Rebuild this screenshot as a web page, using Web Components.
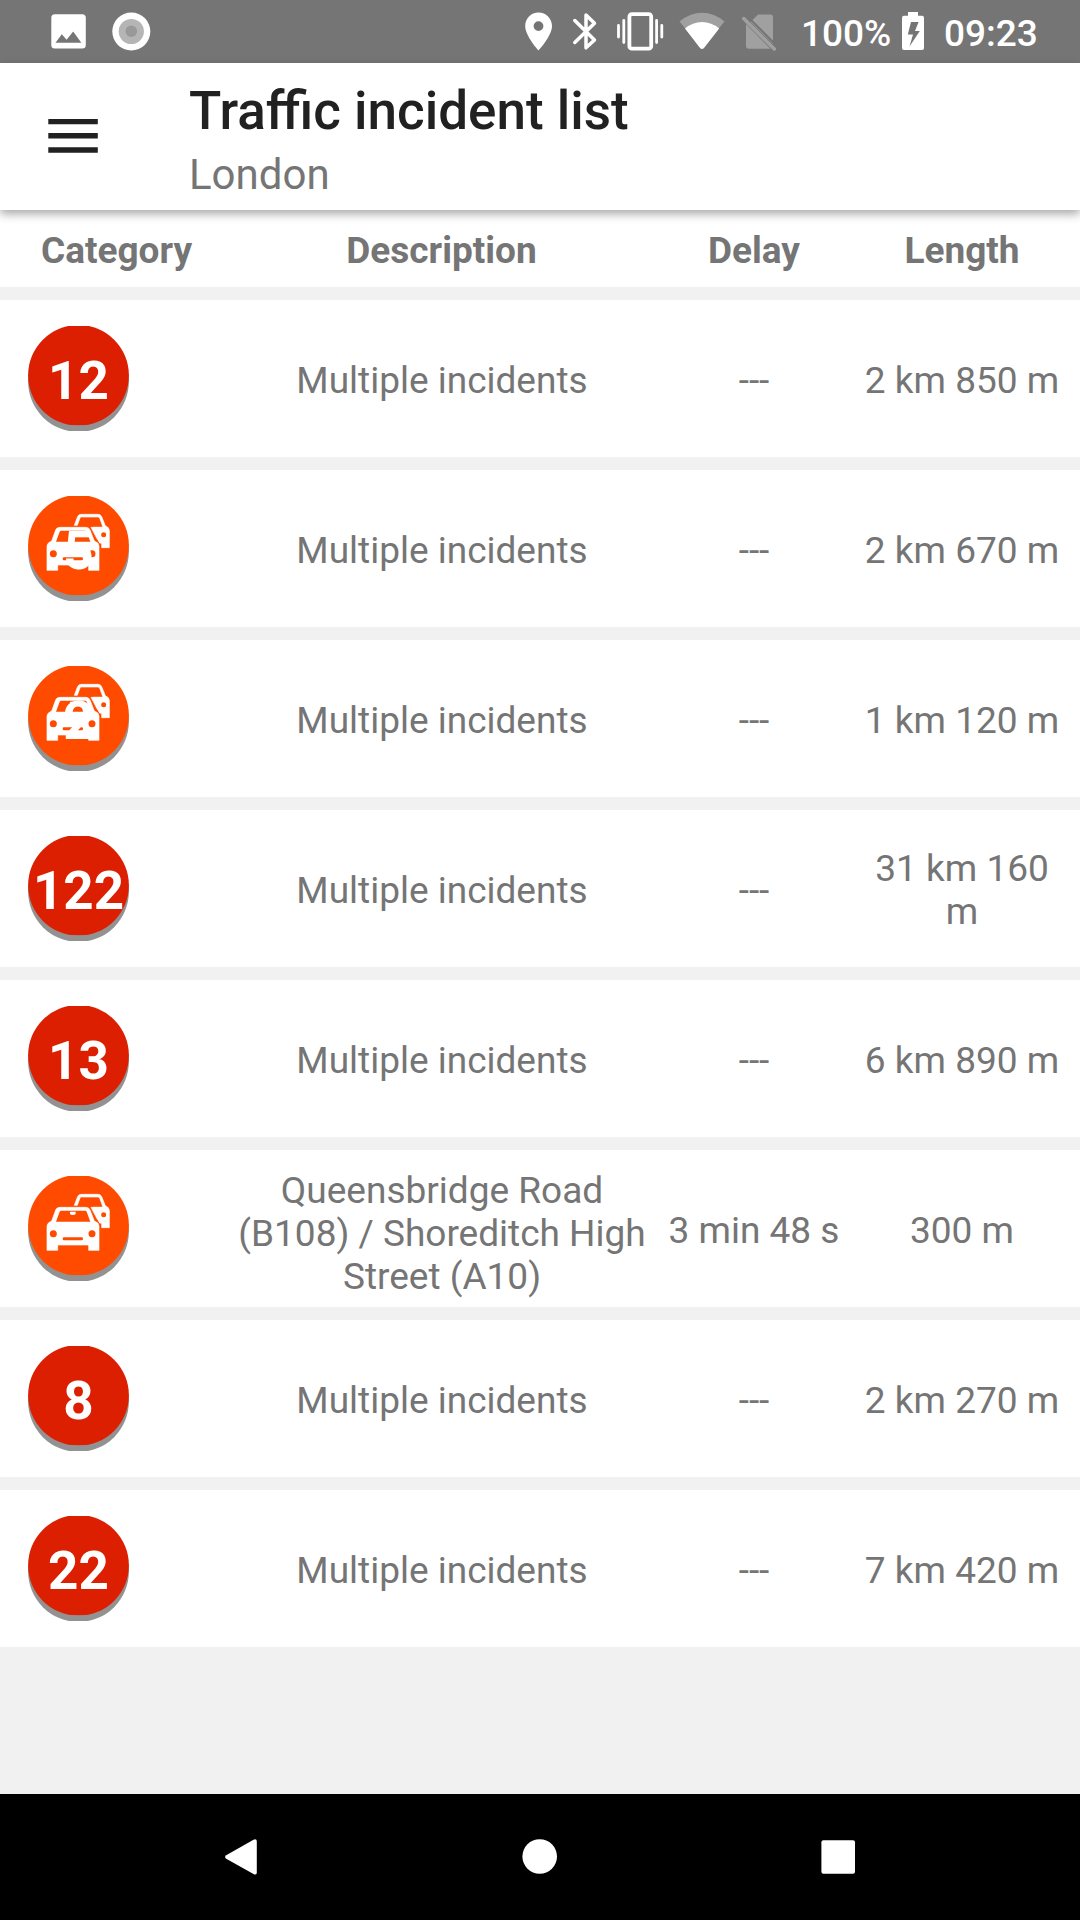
<!DOCTYPE html>
<html lang="en">
<head>
<meta charset="utf-8">
<title>Traffic incident list</title>
<style>
html,body{margin:0;padding:0;background:#f1f1f1}
body{width:1080px;height:1920px;overflow:hidden;font-family:Roboto,"Noto Sans",sans-serif}
</style>
</head>
<body>
<traffic-app></traffic-app>
<script>
const define = (name, html) => {
  const tpl = document.createElement('template');
  tpl.innerHTML = html;
  customElements.define(name, class extends HTMLElement {
    constructor() {
      super();
      this.attachShadow({ mode: 'open' }).append(tpl.content.cloneNode(true));
    }
  });
};

define('status-bar', `
<style>
:host{display:flex;flex:none;height:63px;background:#757575;color:#fff;font-size:37px;font-weight:500;line-height:43px;white-space:nowrap}
svg{display:block;flex:none;height:63px}
.spacer{flex:1}
.pct{width:100px;padding-top:12px;box-sizing:border-box}
.time{width:155px;padding-top:12px;padding-left:19px;box-sizing:border-box}
</style>
<svg width="160" viewBox="0 0 160 63">
  <path fill="#fff" fill-rule="evenodd" d="M54.8 14.3H82.3Q85.8 14.3 85.8 17.8V45Q85.8 48.5 82.3 48.5H54.8Q51.3 48.5 51.3 45V17.8Q51.3 14.3 54.8 14.3ZM55.5 42.7H81.3L73.2 31.5 66.6 39.8 61.8 34.2Z"/>
  <circle cx="131.3" cy="31.5" r="19" fill="#fff"/><circle cx="131.3" cy="31.5" r="12.6" fill="#b5b5b5"/><circle cx="131.3" cy="31.2" r="5.8" fill="#999"/>
</svg>
<div class="spacer"></div>
<svg width="40" viewBox="520 0 40 63"><path fill="#fff" fill-rule="evenodd" d="M538.500 12.500C531 12.500 525.200 18.500 525.200 26C525.200 36 538.500 50.500 538.500 50.500S552 36 552 26C552 18.500 546 12.500 538.500 12.500ZM538.500 21.200A4.900 4.900 0 1 1 538.500 31A4.900 4.900 0 1 1 538.500 21.200Z"/></svg>
<svg width="50" viewBox="560 0 50 63"><path fill="none" stroke="#fff" stroke-width="3.500" stroke-linejoin="round" stroke-linecap="round" d="M574.800 20.500L594.500 40 586 47.800V15L594.500 23.200 574.800 42.500"/></svg>
<svg width="65" viewBox="610 0 65 63"><rect x="629.400" y="14.200" width="21.800" height="34.500" rx="2.500" fill="none" stroke="#fff" stroke-width="3.800"/><path stroke="#fff" stroke-width="2.800" stroke-linecap="round" d="M618.500 25.500V37M623.800 20.500V42.500M656.600 20.500V42.500M661.800 25.500V37"/></svg>
<svg width="60" viewBox="675 0 60 63"><path fill="#a0a0a0" d="M702 49L679.500 21.500Q690 12.800 702 12.800T724.500 21.500Z"/><path fill="#fff" d="M700 48L685 28.500Q692.500 22 702 22T719.200 28.500L704 48Q702 50 700 48Z"/></svg>
<svg width="66" viewBox="735 0 66 63"><path fill="#a0a0a0" d="M750.500 22L758 14.500H770.500Q773 14.500 773 17.500V44Z"/><path fill="#a0a0a0" d="M746 24L770.500 48.800H749Q746 48.800 746 46Z"/><path stroke="#757575" stroke-width="2" d="M748 17L777 46"/><path stroke="#a0a0a0" stroke-width="3.500" stroke-linecap="round" d="M743.700 18.500L774.300 49"/></svg>
<span class="pct">100%</span>
<svg width="24" viewBox="901 0 24 63"><path fill="#fff" fill-rule="evenodd" d="M908 12H918V15.800H922Q924 15.800 924 18V48Q924 50 922 50H904Q902 50 902 48V18Q902 15.800 904 15.800H908ZM911 22L907.800 34.500H913L909.500 46.500 919.800 31H915L918.600 22Z"/></svg>
<span class="time">09:23</span>
`);

define('app-bar', `
<style>
:host{display:flex;flex:none;height:147px;background:#fff;position:relative;z-index:1;box-shadow:0 4px 9px rgba(0,0,0,.34)}
svg{display:block;flex:none}
.titles{display:flex;flex-direction:column;padding-top:17px;gap:8px;white-space:nowrap}
.title{font-size:53px;line-height:62px;font-weight:500;color:#212121}
.sub{font-size:42px;line-height:49px;color:#757575}
</style>
<svg width="189" height="147" viewBox="0 63 189 147"><path fill="#212121" d="M48.300 118.900H97.800V124.300H48.300ZM48.300 133H97.800V138.600H48.300ZM48.300 147.200H97.800V152.700H48.300Z"/></svg>
<div class="titles"><div class="title"><slot name="title"></slot></div><div class="sub"><slot name="subtitle"></slot></div></div>
`);

const columns = 'display:grid;grid-template-columns:233px 417px 208px 208px;padding-right:14px;background:#fff;color:#757575;font-size:37px;line-height:43px;text-align:center;';

define('list-header', `
<style>
:host{${columns}height:77px;flex:none;box-sizing:border-box;padding-top:19px;font-weight:700}
</style>
<div>Category</div><div>Description</div><div>Delay</div><div>Length</div>
`);

const cars = `
<g transform="translate(-18 -16) scale(.33333)">
  <g fill="#fff" stroke="#fff" stroke-width="2" stroke-linejoin="round">
    <path d="M193 136L202 112Q205 103 214 103H264Q272 103 275 110L286 137Q298 142 298 152V203H275V189H269L250 142H279L269 114Q268 111 264 111H214Q211 111 210 114L202 136Z"/>
    <path d="M243 142H282V189H269Q266 181 262 178Z"/>
    <path d="M111 271V198Q112 188 125 183L137 150Q140 142 150 142H228Q237 142 240 150L253 183Q267 188 267 198V271H236V255H143V271Z"/>
  </g>
  <g fill="#ff4b00">
    <path d="M138 185L149 155Q150 152 154 152H225Q229 152 230 155L241 185Z"/>
    <circle cx="130" cy="221" r="10.500"/><circle cx="246" cy="221" r="10.500"/><circle cx="281" cy="164" r="7.500"/>
    <rect x="158" y="232" width="61" height="9" rx="4"/>
  </g>
  <path fill="#fff" d="M180 155H197V162L192 165H185L180 162Z"/>
</g>`;

customElements.define('incident-badge', class extends HTMLElement {
  constructor() {
    super();
    const jam = this.getAttribute('kind') === 'jam';
    const count = this.getAttribute('count') || '';
    this.attachShadow({ mode: 'open' }).innerHTML = `
<style>
:host{display:block;width:102px;height:105px}
svg{display:block}
text{font-size:53px;font-weight:700;fill:#fff;text-anchor:middle}
</style>
<svg width="102" height="105" viewBox="0 0 102 105">
  <clipPath id="base"><rect width="102" height="105"/></clipPath>
  <clipPath id="disc"><rect width="102" height="99.300"/></clipPath>
  <circle cx="50.500" cy="55.500" r="50.400" fill="#929292" clip-path="url(#base)"/>
  <circle cx="50.500" cy="49.300" r="50.400" fill="${jam ? '#ff4b00' : '#db1f00'}" clip-path="url(#disc)"/>
  ${jam ? cars : ''}
  ${count ? `<text x="50.500" y="73">${count}</text>` : ''}
</svg>`;
  }
});

define('incident-row', `
<style>
:host{${columns}height:157px;flex:none;align-items:center}
.badge{align-self:start;padding:26px 0 0 28px}
.cell{padding-top:4px}
.delay{white-space:nowrap}
.desc{padding:4px 3px 0 4px}
:host([tall]) .desc{padding-top:9px}
:host([wrapped]) .length{padding-top:2px}
</style>
<div class="badge"><slot name="badge"></slot></div>
<div class="cell desc"><slot name="description"></slot></div>
<div class="cell delay"><slot name="delay"></slot></div>
<div class="cell length"><slot name="length"></slot></div>
`);

customElements.define('incident-list', class extends HTMLElement {
  constructor() {
    super();
    const M = 'Multiple incidents';
    const rows = [
      ['', 12, M, '---', '2 km 850 m'],
      ['jam', 5, M, '---', '2 km 670 m'],
      ['jam', 2, M, '---', '1 km 120 m'],
      ['', 122, M, '---', '31 km 160 m'],
      ['', 13, M, '---', '6 km 890 m'],
      ['jam', '', 'Queensbridge Road (B108) / Shoreditch High Street (A10)', '3 min 48 s', '300 m'],
      ['', 8, M, '---', '2 km 270 m'],
      ['', 22, M, '---', '7 km 420 m']
    ];
    this.attachShadow({ mode: 'open' }).innerHTML = `
<style>:host{display:flex;flex-direction:column;gap:13px;flex:1;background:#f1f1f1}</style>
<list-header></list-header>` + rows.map(([kind, count, desc, delay, length]) => `
<incident-row${desc === M ? '' : ' tall'}${length.length > 10 ? ' wrapped' : ''}>
  <incident-badge slot="badge" kind="${kind}" count="${count}"></incident-badge>
  <span slot="description">${desc}</span><span slot="delay">${delay}</span><span slot="length">${length}</span>
</incident-row>`).join('');
  }
});

define('nav-bar', `
<style>
:host{display:flex;flex:none;height:126px;background:#000}
svg{display:block}
</style>
<svg width="1080" height="126" viewBox="0 1794 1080 126" fill="#fff">
  <path d="M226.200 1855.200L253.500 1839.700Q256.800 1838.500 256.800 1841.500V1872.500Q256.800 1875.500 253.500 1874L226.200 1858.800Q224 1857 226.200 1855.200Z"/>
  <circle cx="539.700" cy="1856.500" r="17.300"/>
  <rect x="821.400" y="1840.200" width="33.600" height="33.600" rx="2"/>
</svg>
`);

define('traffic-app', `
<style>:host{display:flex;flex-direction:column;width:1080px;height:1920px}</style>
<status-bar></status-bar>
<app-bar><span slot="title">Traffic incident list</span><span slot="subtitle">London</span></app-bar>
<incident-list></incident-list>
<nav-bar></nav-bar>
`);
</script>
</body>
</html>
